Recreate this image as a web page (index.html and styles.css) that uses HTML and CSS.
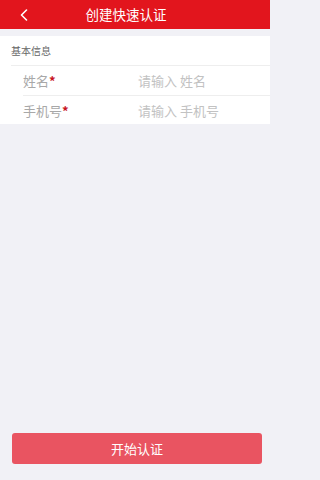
FILE: index.html
```html
<!DOCTYPE html>
<html lang="zh">
<head>
<meta charset="utf-8">
<meta name="viewport" content="width=270">
<link rel="stylesheet" href="styles.css">
</head>
<body>
<div class="page">
  <header class="topbar">
    <svg class="back" width="10" height="12" viewBox="0 0 10 12"><path d="M7.5 1 L2.5 6 L7.5 11" fill="none" stroke="#fff" stroke-width="1.6" stroke-linecap="round" stroke-linejoin="round"/></svg>
    <h1 class="title">创建快速认证</h1>
  </header>
  <section class="card">
    <div class="section-label">基本信息</div>
    <div class="row">
      <span class="field">姓名<i class="star">*</i></span>
      <span class="placeholder">请输入 姓名</span>
    </div>
    <div class="row">
      <span class="field">手机号<i class="star">*</i></span>
      <span class="placeholder">请输入 手机号</span>
    </div>
  </section>
  <div class="spacer"></div>
  <div class="footer">
    <button class="submit">开始认证</button>
  </div>
</div>
</body>
</html>
```
FILE: styles.css
```css
* { box-sizing: border-box; margin: 0; padding: 0; }
html, body { height: 100%; }
body {
  background: #f1f1f6;
  font-family: "Noto Sans CJK SC", "Noto Sans", sans-serif;
}
.page {
  display: flex;
  flex-direction: column;
  width: 270px;
  height: 480px;
}
.topbar {
  position: relative;
  height: 29px;
  background: #e2151d;
  display: flex;
  align-items: center;
  justify-content: center;
}
.back {
  position: absolute;
  left: 19px;
  top: 9px;
}
.title {
  color: #fff;
  font-size: 13.5px;
  font-weight: 400;
  line-height: 29px;
  margin-right: 18px;
}
.card {
  margin-top: 7px;
  background: #fff;
  padding-left: 11px;
}
.section-label {
  height: 30px;
  display: flex;
  align-items: center;
  font-size: 10px;
  color: #666;
  border-bottom: 1px solid #eeeeee;
}
.row {
  height: 29px;
  display: flex;
  align-items: center;
  padding-left: 12px;
  font-size: 13px;
}
.row + .row {
  margin-left: 12px;
  padding-left: 0;
  border-top: 1px solid #eeeeee;
}
.field {
  width: 115px;
  color: #a8a8a8;
}
.star {
  font-style: normal;
  color: #c8141e;
  font-weight: 700;
}
.placeholder {
  color: #c2c2c2;
}
.spacer { flex: 1; }
.footer {
  padding: 0 8px 16px 12px;
}
.submit {
  width: 250px;
  height: 31px;
  border: none;
  border-radius: 3px;
  background: #e95461;
  color: #fff;
  font-family: "Noto Sans CJK SC", "Noto Sans", sans-serif;
  font-size: 13px;
}
```
